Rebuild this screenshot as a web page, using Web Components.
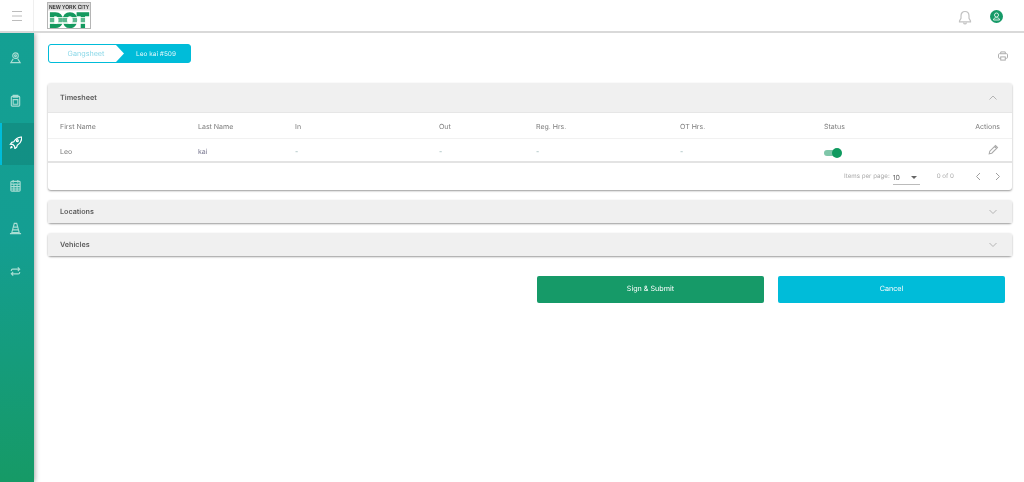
<!DOCTYPE html>
<html lang="en">
<head>
<meta charset="utf-8">
<title>Timesheet</title>
<style>
  html, body { margin: 0; height: 100%; background: #fff; }
  body { font-family: "Inter", "Open Sans", sans-serif; color: #777; overflow: hidden; text-rendering: geometricPrecision; }
</style>
</head>
<body>
<app-shell>
  <top-bar slot="top"></top-bar>
  <side-rail slot="side"></side-rail>
  <crumb-trail first="Gangsheet" current="Leo kai #509"></crumb-trail>
  <fold-panel title="Timesheet" open>
    <sheet-table></sheet-table>
  </fold-panel>
  <fold-panel title="Locations"></fold-panel>
  <fold-panel title="Vehicles"></fold-panel>
  <form-actions></form-actions>
</app-shell>

<script>
class AppShell extends HTMLElement {
  constructor() {
    super();
    this.attachShadow({ mode: "open" });
    this.shadowRoot.innerHTML = `
      <style>
        :host { display: grid; grid-template-columns: 34px 1fr; grid-template-rows: 33px 1fr; height: 482px; }
        .top { grid-column: 1 / 3; position: relative; z-index: 2; }
        .side { position: relative; z-index: 1; }
        main { padding: 11px 12px 0 14px; display: flex; flex-direction: column; will-change: transform; }
      </style>
      <div class="top"><slot name="top"></slot></div>
      <div class="side"><slot name="side"></slot></div>
      <main><slot></slot></main>
    `;
  }
}

class TopBar extends HTMLElement {
  constructor() {
    super();
    this.attachShadow({ mode: "open" });
    this.shadowRoot.innerHTML = `
      <style>
        :host { display: flex; align-items: stretch; height: 33px; box-sizing: border-box; background: #fff; border-bottom: 2px solid #d9d9d9; }
        .menu { width: 33px; border-right: 1px solid #efefef; display: flex; align-items: center; justify-content: center; }
        .logo { margin: 2px 0 0 13px; width: 44px; height: 27px; display: block; overflow: visible; }
        .right { margin-left: auto; display: flex; align-items: center; gap: 18px; padding: 1px 21px 0 0; }
        .bell { margin-top: 2px; }
      </style>
      <div class="menu">
        <svg width="12" height="10" viewBox="0 0 12 10" fill="none" stroke="#bcbcbc" stroke-width="1"><path d="M1 .5h10M1 5h10M1 9.500h10"/></svg>
      </div>
      <svg class="logo" viewBox="0 0 44 27">
        <defs>
          <linearGradient id="stripe" x1="0" y1="0" x2="0" y2="1" gradientUnits="userSpaceOnUse" gradientTransform="translate(0 10) scale(1 17)">
            <stop offset="0" stop-color="#14995f"/><stop offset=".3" stop-color="#14995f"/>
            <stop offset=".3" stop-color="#d4eee0"/><stop offset=".38" stop-color="#d4eee0"/>
            <stop offset=".38" stop-color="#5cb98f"/><stop offset=".6" stop-color="#5cb98f"/>
            <stop offset=".6" stop-color="#d4eee0"/><stop offset=".68" stop-color="#d4eee0"/>
            <stop offset=".68" stop-color="#14995f"/><stop offset="1" stop-color="#14995f"/>
          </linearGradient>
        </defs>
        <rect x=".5" y=".5" width="43" height="26" fill="#fff" stroke="#b5b5b5"/>
        <rect x="1" y="1" width="42" height="7.500" fill="#dcdcdc"/>
        <text x="2" y="6.800" font-family="Liberation Sans" font-size="6" font-weight="700" fill="#333" textLength="40" lengthAdjust="spacingAndGlyphs">NEW YORK CITY</text>
        <text x="2.500" y="25.200" font-family="Liberation Sans" font-size="20" font-weight="700" fill="url(#stripe)" stroke="url(#stripe)" stroke-width="1.800" textLength="39" lengthAdjust="spacingAndGlyphs">DOT</text>
      </svg>
      <div class="right">
        <svg class="bell" width="14" height="15" viewBox="0 0 14 15" fill="none" stroke="#c2c2c2" stroke-width="1.200"><path d="M7 1.500c-2.600 0-4 2-4 4.400v2.400L1.500 11v.8h11V11L11 8.300V5.900c0-2.400-1.400-4.400-4-4.400z"/><path d="M5.500 12.500c.3 1 .8 1.500 1.500 1.500s1.200-.5 1.500-1.500"/></svg>
        <svg width="13" height="13" viewBox="0 0 13 13"><circle cx="6.500" cy="6.500" r="6.500" fill="#169a68"/><g fill="none" stroke="#d7f0e4" stroke-width="1"><circle cx="6.500" cy="5" r="2"/><path d="M3.500 10c0-1.500 1-2.300 3-2.300s3 .8 3 2.300z"/></g></svg>
      </div>
    `;
  }
}

const RAIL_ICONS = [
  `<circle cx="7" cy="5" r="3"/><circle cx="7" cy="5" r="1"/><path d="M4.500 8.500L2 12.500h10l-2.500-4"/>`,
  `<rect x="2.500" y="2.500" width="9" height="10.500" rx="1"/><path d="M4.500 1.500h5v2h-5zM4.500 6h5v5h-5z"/>`,
  `<path d="M12.800 1.200c-3.500.2-5.800 1.800-7.600 5L3 6.800 1.500 8.800l2.600.3 1.900 1.900.3 2.600 2-1.500.6-2.200c3.200-1.800 4.800-4.100 4.900-8.700z"/><circle cx="9" cy="5" r="1"/><path d="M3.200 11c-.8.400-1.200 1-1.300 1.800.8-.1 1.400-.5 1.800-1.300"/>`,
  `<rect x="2" y="2.500" width="10" height="10.500" rx="1"/><path d="M4.500 1v3M9.500 1v3M2 5.500h10M2 8.200h10M2 10.700h10M5.300 5.500V13M8.700 5.500V13"/>`,
  `<path d="M5.700 1.500h2.600L11 11.500H3zM1 12.500h12M4.800 5.500h4.400M4 8.500h6"/>`,
  `<path d="M2.500 6.500V6a1.500 1.500 0 0 1 1.500-1.500h7.500M9.500 2.500l2 2-2 2M11.500 7.500V8A1.500 1.500 0 0 1 10 9.500H2.500M4.500 7.500l-2 2 2 2"/>`
];

class SideRail extends HTMLElement {
  constructor() {
    super();
    this.attachShadow({ mode: "open" });
    const items = RAIL_ICONS.map((icon, i) => `
      <div class="item ${i === 2 ? "active" : ""}">
        <svg width="13" height="13" viewBox="0 0 14 14" fill="none" stroke="${i === 2 ? "#fff" : "#a9ddd3"}" stroke-width="${i === 2 ? 1.300 : 1.200}">${icon}</svg>
      </div>`).join("");
    this.shadowRoot.innerHTML = `
      <style>
        :host { display: flex; flex-direction: column; height: 100%; box-sizing: border-box; padding-top: 4px;
          background: linear-gradient(180deg, #14a093 0%, #149e92 45%, #169a66 100%); box-shadow: 1px 0 5px rgba(0,0,0,.35); }
        .item { height: 42.800px; display: flex; align-items: center; justify-content: center; box-sizing: border-box; padding: 0 3px 2px 0; }
        .active { background: rgba(0,0,0,.09); border-left: 2px solid #00bcd9; padding-right: 5px; }
      </style>
      ${items}
    `;
  }
}

class CrumbTrail extends HTMLElement {
  constructor() {
    super();
    this.attachShadow({ mode: "open" });
  }
  connectedCallback() {
    this.shadowRoot.innerHTML = `
      <style>
        :host { display: flex; align-items: flex-start; justify-content: space-between; height: 39px; font-size: 7.200px; }
        .trail { display: flex; width: 143px; height: 19px; border-radius: 3px; background: #00bcd9; border: 1px solid #00bcd9; box-sizing: border-box; overflow: hidden; }
        .first { width: 75px; flex: none; box-sizing: border-box; background: #fff; color: #8bd8e8; display: flex; align-items: center; justify-content: center; padding-right: 1px;
          clip-path: polygon(0 0, 67px 0, 75px 50%, 67px 100%, 0 100%); }
        .current { flex: 1; color: #e6f9fc; font-size: 6.500px; display: flex; align-items: center; justify-content: center; padding-right: 2px; }
        .print { margin: 7px 4px 0 0; }
      </style>
      <div class="trail">
        <div class="first">${this.getAttribute("first")}</div>
        <div class="current">${this.getAttribute("current")}</div>
      </div>
      <svg class="print" width="10" height="10" viewBox="0 0 11 11" fill="none" stroke="#adadad" stroke-width="1.100"><path d="M3 3V1h5v2M3 8H1.500a1 1 0 0 1-1-1V4a1 1 0 0 1 1-1h8a1 1 0 0 1 1 1v3a1 1 0 0 1-1 1H8"/><rect x="3" y="6.500" width="5" height="3.500"/></svg>
    `;
  }
}

class FoldPanel extends HTMLElement {
  constructor() {
    super();
    this.attachShadow({ mode: "open" });
  }
  connectedCallback() {
    const open = this.hasAttribute("open");
    const chevron = open ? "M.5 4.500L4 1l3.500 3.500" : "M.5 1L4 4.500 7.500 1";
    this.shadowRoot.innerHTML = `
      <style>
        :host { display: block; margin-bottom: 10px; border-radius: 3px; background: #fff; box-shadow: 0 1px 2px rgba(0,0,0,.4); }
        header { display: flex; align-items: center; justify-content: space-between; height: ${open ? 29 : 23}px; padding: 0 15px 0 12px; box-sizing: border-box; background: #f0f0f0; border-radius: 3px 3px 0 0; font-size: 7.200px; font-weight: 600; color: #5c5c5c; }
      </style>
      <header>
        <span>${this.getAttribute("title")}</span>
        <svg width="8" height="6" viewBox="0 0 8 6" fill="none" stroke="#b4b4b4" stroke-width="1"><path d="${chevron}"/></svg>
      </header>
      <slot></slot>
    `;
  }
}

class SheetTable extends HTMLElement {
  constructor() {
    super();
    this.attachShadow({ mode: "open" });
    const cols = ["First Name", "Last Name", "In", "Out", "Reg. Hrs.", "OT Hrs.", "Status"];
    const row = ["Leo", "kai", "-", "-", "-", "-"];
    this.shadowRoot.innerHTML = `
      <style>
        :host { display: block; font-size: 7px; color: #7a7a7a; }
        .row { display: grid; grid-template-columns: 138px 97px 144px 97px 144px 144px 1fr auto; align-items: center; padding: 0 12px; }
        .head { height: 27px; padding-top: 1px; border-bottom: 1px solid #f1f1f1; border-top: 1px solid #e6e6e6; box-sizing: border-box; }
        .body { height: 24px; border-bottom: 2px solid #e3e3e3; box-sizing: border-box; padding-top: 2px; }
        .last { color: #77768f; }
        .toggle { position: relative; width: 18px; height: 10px; display: block; top: 2px; }
        .toggle::before { content: ""; position: absolute; left: 0; top: 2px; width: 14px; height: 6px; border-radius: 3px; background: #7fc6a9; }
        .toggle::after { content: ""; position: absolute; right: 0; top: 0; width: 10px; height: 10px; border-radius: 50%; background: #0f9a5f; }
        .dash { color: #8aa; }
        .pen { margin: -3px 1px 0 0; }
        .foot { height: 27px; display: flex; align-items: center; justify-content: flex-end; padding-right: 11px; font-size: 6.200px; color: #a8a8a8; }
        .size { display: flex; justify-content: space-between; align-items: center; width: 27px; height: 11px; margin: 3px 17px 0 3px; border-bottom: 1px solid #bbb; color: #666; font-size: 7px; padding-bottom: 1px; }
        .caret { width: 0; height: 0; border: 3px solid transparent; border-top-color: #666; border-bottom: 0; margin-right: 3px; }
        .pager { display: flex; gap: 14px; margin-left: 21px; }
      </style>
      <div class="row head">
        ${cols.map((c) => `<span>${c}</span>`).join("")}
        <span>Actions</span>
      </div>
      <div class="row body">
        ${row.map((c) => `<span class="${c === "-" ? "dash" : c === "kai" ? "last" : ""}">${c}</span>`).join("")}
        <span class="toggle"></span>
        <svg class="pen" width="11" height="11" viewBox="0 0 11 11" fill="none" stroke="#ababab" stroke-width="1.100"><path d="M1.200 9.800l.6-2.600 5.700-5.700 2 2-5.700 5.700zM6.500 2.500l2 2"/></svg>
      </div>
      <div class="foot">
        <span>Items per page:</span>
        <div class="size"><span>10</span><i class="caret"></i></div>
        <span>0 of 0</span>
        <div class="pager">
          <svg width="6" height="9" viewBox="0 0 6 9" fill="none" stroke="#a0a0a0" stroke-width="1"><path d="M5 1L1.500 4.500 5 8"/></svg>
          <svg width="6" height="9" viewBox="0 0 6 9" fill="none" stroke="#a0a0a0" stroke-width="1"><path d="M1 1l3.500 3.500L1 8"/></svg>
        </div>
      </div>
    `;
  }
}

class FormActions extends HTMLElement {
  constructor() {
    super();
    this.attachShadow({ mode: "open" });
    this.shadowRoot.innerHTML = `
      <style>
        :host { display: flex; gap: 14px; justify-content: flex-end; padding: 10px 7px 0 0; }
        button { width: 227px; height: 27px; border: 0; padding: 0 0 2px; border-radius: 2px; color: #fff; font: 7.200px "Inter", "Open Sans", sans-serif; text-rendering: geometricPrecision; }
        .go { background: #169a68; }
        .stop { background: #00bcd9; }
      </style>
      <button class="go">Sign &amp; Submit</button>
      <button class="stop">Cancel</button>
    `;
  }
}

customElements.define("app-shell", AppShell);
customElements.define("top-bar", TopBar);
customElements.define("side-rail", SideRail);
customElements.define("crumb-trail", CrumbTrail);
customElements.define("fold-panel", FoldPanel);
customElements.define("sheet-table", SheetTable);
customElements.define("form-actions", FormActions);
</script>
</body>
</html>
